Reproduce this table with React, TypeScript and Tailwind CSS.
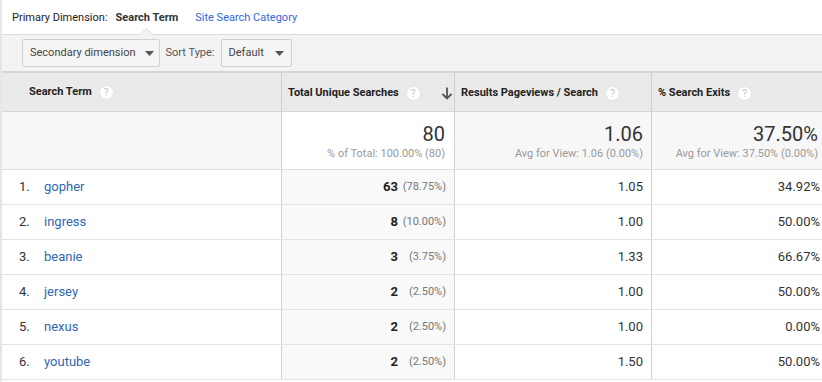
import React from "react";

const Help = () => (
  <span className="inline-flex items-center justify-center w-[15px] h-[15px] rounded-full bg-white border border-[#e2e2e2] text-[10px] font-normal text-[#c2c2c2] leading-none ml-[7px]">
    ?
  </span>
);

const Caret = ({ cls }: { cls: string }) => (
  <svg width="9" height="5" viewBox="0 0 9 5" className={cls}>
    <path d="M0 0 L9 0 L4.5 5 Z" fill="#555" />
  </svg>
);

const rows = [
  { i: "1.", t: "gopher", n: "63", p: "(78.75%)", r: "1.05", e: "34.92%" },
  { i: "2.", t: "ingress", n: "8", p: "(10.00%)", r: "1.00", e: "50.00%" },
  { i: "3.", t: "beanie", n: "3", p: "(3.75%)", r: "1.33", e: "66.67%" },
  { i: "4.", t: "jersey", n: "2", p: "(2.50%)", r: "1.00", e: "50.00%" },
  { i: "5.", t: "nexus", n: "2", p: "(2.50%)", r: "1.00", e: "0.00%" },
  { i: "6.", t: "youtube", n: "2", p: "(2.50%)", r: "1.50", e: "50.00%" },
];

export default function App() {
  return (
    <div
      className="w-[822px] h-[382px] bg-white overflow-hidden border-l-2 border-[#e6e6e6] text-[#222]"
      style={{ fontFamily: "Roboto, 'Liberation Sans', Arial, sans-serif" }}
    >
      {/* primary dimension */}
      <div className="h-[34px] flex items-center pl-[10px] pt-[2px] text-[11px] relative">
        <span className="text-[#222]">Primary Dimension:</span>
        <span className="font-bold ml-[8px] text-[#333]">Search Term</span>
        <span className="ml-[17px] text-[#3367d6]">Site Search Category</span>
        <svg
          width="13"
          height="7"
          viewBox="0 0 13 7"
          className="absolute left-[138px] bottom-[-1px]"
        >
          <path d="M0 7 L6.5 0.5 L13 7" fill="#f3f3f3" stroke="#dcdcdc" strokeWidth="1" />
        </svg>
      </div>
      {/* toolbar */}
      <div className="h-[37px] bg-[#f3f3f3] border-t border-[#dcdcdc] flex items-center pl-[20px] text-[11px]">
        <div className="h-[28px] pl-[7px] pr-[5px] flex items-center bg-[#f5f5f5] border border-[#d0d0d0] rounded-[2px] text-[#444]">
          Secondary dimension
          <Caret cls="ml-[9px]" />
        </div>
        <span className="ml-[6px] text-[#555]">Sort Type:</span>
        <div className="ml-[6px] h-[28px] px-[7px] flex items-center bg-[#f5f5f5] border border-[#d0d0d0] rounded-[2px] text-[#444]">
          Default
          <Caret cls="ml-[11px]" />
        </div>
      </div>
      {/* table */}
      <div className="border-t-2 border-[#d6d6d6]">
        <div className="grid grid-cols-[280px_173px_197px_1fr] h-[39px] bg-[#eaeaea] border-b border-[#d6d6d6] text-[11px] font-bold">
          <div className="border-r border-[#d0d0d0] flex items-center pl-[27px] pt-[1px]">
            Search Term
            <Help />
          </div>
          <div className="border-r border-[#d0d0d0] flex items-center pl-[6px] pr-[1px] pt-[3px]">
            Total Unique Searches
            <Help />
            <svg width="12" height="13" viewBox="0 0 12 13" className="ml-auto">
              <path d="M6 0.5 V11.5 M1.5 7 L6 11.5 L10.5 7" stroke="#555" strokeWidth="1.8" fill="none" />
            </svg>
          </div>
          <div className="border-r border-[#d0d0d0] flex items-center pl-[6px] pt-[3px]">
            Results Pageviews / Search
            <Help />
          </div>
          <div className="flex items-center pl-[6px] pt-[3px]">
            % Search Exits
            <Help />
          </div>
        </div>
        {/* summary */}
        <div className="grid grid-cols-[280px_173px_197px_1fr] h-[58px] border-b border-[#e0e0e0]">
          <div className="border-r border-[#d0d0d0] bg-[#f7f7f7]" />
          <div className="border-r border-[#d0d0d0] bg-white flex flex-col items-end justify-center pr-[9px] pt-[2px]">
            <div className="text-[20px] leading-[22px] text-[#333]">80</div>
            <div className="text-[11px] text-[#999] leading-[14px] mt-[2px]">% of Total: 100.00% (80)</div>
          </div>
          <div className="border-r border-[#d0d0d0] bg-[#f7f7f7] flex flex-col items-end justify-center pr-[8px] pt-[2px]">
            <div className="text-[20px] leading-[22px] text-[#333]">1.06</div>
            <div className="text-[11px] text-[#999] leading-[14px] mt-[2px]">Avg for View: 1.06 (0.00%)</div>
          </div>
          <div className="bg-[#f7f7f7] flex flex-col items-end justify-center pr-[4px] pt-[2px]">
            <div className="text-[20px] leading-[22px] text-[#333]">37.50%</div>
            <div className="text-[11px] text-[#999] leading-[14px] mt-[2px]">Avg for View: 37.50% (0.00%)</div>
          </div>
        </div>
        {rows.map((r) => (
          <div
            key={r.i}
            className="grid grid-cols-[280px_173px_197px_1fr] h-[35px] border-b border-[#e3e3e3] text-[13px]"
          >
            <div className="border-r border-[#d0d0d0] bg-white flex items-center">
              <span className="w-[42px] pl-[17px] text-[#333]">{r.i}</span>
              <span className="text-[#2f69ad]">{r.t}</span>
            </div>
            <div className="border-r border-[#d0d0d0] bg-[#f9f9f9] flex items-center justify-end pr-[8px]">
              <span className="font-bold text-[#222]">{r.n}</span>
              <span className="w-[48px] text-right text-[11px] text-[#777]">{r.p}</span>
            </div>
            <div className="border-r border-[#d0d0d0] bg-white flex items-center justify-end pr-[8px] text-[#333]">
              {r.r}
            </div>
            <div className="bg-white flex items-center justify-end pr-[2px] text-[#333]">{r.e}</div>
          </div>
        ))}
      </div>
    </div>
  );
}
